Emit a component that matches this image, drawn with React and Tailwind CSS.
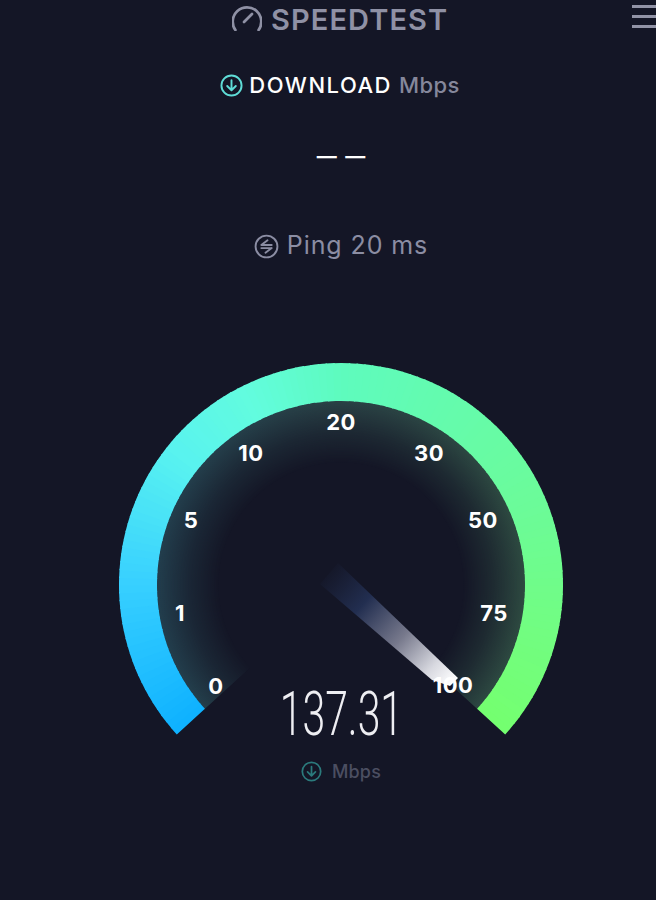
import React from "react";

const CX = 341;
const CY = 585;
const OUTER = 222;
const INNER = 184;
const START = 137.7; // degrees, svg clockwise from +x
const SWEEP = 264.6;

const stops = [
  [0, [15, 178, 255]],
  [0.16, [56, 208, 255]],
  [0.3, [88, 242, 240]],
  [0.4, [98, 252, 222]],
  [0.5, [94, 251, 190]],
  [0.75, [107, 251, 154]],
  [0.9, [114, 253, 128]],
  [1, [116, 255, 112]],
];

const colorAt = (t) => {
  for (let i = 1; i < stops.length; i++) {
    if (t <= stops[i][0]) {
      const [t0, c0] = stops[i - 1];
      const [t1, c1] = stops[i];
      const k = (t - t0) / (t1 - t0);
      return `rgb(${c0.map((c, j) => Math.round(c + (c1[j] - c) * k)).join(",")})`;
    }
  }
  return "rgb(116,255,112)";
};

const pt = (r, deg) => {
  const a = (deg * Math.PI) / 180;
  return `${(CX + r * Math.cos(a)).toFixed(2)} ${(CY + r * Math.sin(a)).toFixed(2)}`;
};

const segment = (a0, a1) =>
  `M${pt(OUTER, a0)} A${OUTER} ${OUTER} 0 0 1 ${pt(OUTER, a1)} L${pt(INNER, a1)} A${INNER} ${INNER} 0 0 0 ${pt(INNER, a0)} Z`;

const sector = `M${CX} ${CY} L${pt(INNER + 1, START)} A${INNER + 1} ${INNER + 1} 0 1 1 ${pt(INNER + 1, START + SWEEP)} Z`;

const SEGMENTS = 132;
const ticks = [
  ["0", 216, 686],
  ["1", 180, 613],
  ["5", 191, 520],
  ["10", 251, 453],
  ["20", 341, 422],
  ["30", 429, 453],
  ["50", 483, 520],
  ["75", 494, 613],
  ["100", 453, 685],
];

const Gauge = () => (
  <svg viewBox="0 340 656 460" className="block w-[656px] h-[460px]">
    <defs>
      <linearGradient id="glowColor" x1="119" x2="563" y1="0" y2="0" gradientUnits="userSpaceOnUse">
        <stop offset="0" stopColor="#213e50" />
        <stop offset="0.5" stopColor="#2a4246" />
        <stop offset="1" stopColor="#2f4d40" />
      </linearGradient>
      <radialGradient id="glowFade" cx={CX} cy={CY} r={INNER + 1} gradientUnits="userSpaceOnUse">
        <stop offset="0.66" stopColor="#000" />
        <stop offset="0.82" stopColor="#666" />
        <stop offset="1" stopColor="#fff" />
      </radialGradient>
      <mask id="glowMask" maskUnits="userSpaceOnUse" x="0" y="340" width="656" height="460">
        <rect x="0" y="340" width="656" height="460" fill="url(#glowFade)" />
      </mask>
      <linearGradient id="needle" x1="325" y1="570" x2="452" y2="684" gradientUnits="userSpaceOnUse">
        <stop offset="0" stopColor="#1f2a4a" stopOpacity="0" />
        <stop offset="0.3" stopColor="#222e50" />
        <stop offset="0.6" stopColor="#77798c" />
        <stop offset="0.85" stopColor="#d8d9e0" />
        <stop offset="1" stopColor="#ffffff" />
      </linearGradient>
    </defs>

    <path d={sector} fill="url(#glowColor)" mask="url(#glowMask)" />

    {Array.from({ length: SEGMENTS }, (_, i) => {
      const a0 = START + (SWEEP * i) / SEGMENTS;
      const a1 = START + (SWEEP * (i + 1)) / SEGMENTS + (i === SEGMENTS - 1 ? 0 : 0.4);
      return <path key={i} d={segment(a0, a1)} fill={colorAt(i / (SEGMENTS - 1))} />;
    })}

    <polygon points="320,584 338,563 458,678 450,686 432,680" fill="url(#needle)" />

    {ticks.map(([label, x, y]) => (
      <text
        key={label}
        x={x}
        y={y}
        dy="8"
        textAnchor="middle"
        fill="#fff"
        className="font-['Inter',sans-serif] font-bold text-[22px] tracking-[0.5px]"
      >
        {label}
      </text>
    ))}
  </svg>
);

const DownloadIcon = ({ className }) => (
  <svg viewBox="0 0 24 24" fill="none" stroke="currentColor" strokeWidth="2" strokeLinecap="round" strokeLinejoin="round" className={className}>
    <circle cx="12" cy="12" r="10.5" />
    <path d="M12 6.5v10M7.5 12.500l4.500 4.500 4.500-4.500" />
  </svg>
);

const App = () => {
  return (
    <div className="w-[656px] h-[900px] overflow-hidden bg-[#141626] font-['Inter',sans-serif]">
      <div className="flex justify-between items-start h-[33px] pl-[232px]">
        <div className="flex items-start text-[#8f91a5]">
          <svg viewBox="0 0 30 26" fill="none" stroke="currentColor" strokeLinecap="round" className="w-[30px] h-[26px] mt-[5px]">
            <path d="M3.400 25A14.300 14.300 0 1 1 26.600 25" strokeWidth="2.800" />
            <path d="M12 17L20 9" strokeWidth="2.800" />
          </svg>
          <span className="ml-[9px] mt-[3px] text-[29px] leading-[34px] font-semibold tracking-[1.1px]">SPEEDTEST</span>
        </div>
        <div className="flex flex-col gap-[7px] w-[24px] mt-[5px]">
          <div className="h-[3px] bg-[#9193a6]" />
          <div className="h-[3px] bg-[#9193a6]" />
          <div className="h-[3px] bg-[#9193a6]" />
        </div>
      </div>

      <div className="mt-[36px] h-[32px] flex items-center justify-center pl-[24px]">
        <DownloadIcon className="w-[23px] h-[23px] text-[#5fdcd6]" />
        <span className="ml-[6px] text-[22px] font-medium tracking-[1.5px] text-white">DOWNLOAD</span>
        <span className="ml-[7px] text-[22px] font-medium tracking-[0.4px] text-[#85879b]">Mbps</span>
      </div>

      <div className="mt-[37px] h-[36px] flex items-center justify-center pl-[26px] text-white text-[20px] font-bold [word-spacing:4px]">— —</div>

      <div className="mt-[54px] h-[36px] flex items-center justify-center pl-[26px] text-[#8b8da3]">
        <svg viewBox="0 0 24 24" fill="none" stroke="currentColor" strokeWidth="1.800" strokeLinecap="round" strokeLinejoin="round" className="w-[25px] h-[25px]">
          <circle cx="12" cy="12" r="10.500" />
          <path d="M13 6L7 10.500H17M17 13.500H7M17 13.500L11 18" />
        </svg>
        <span className="ml-[8px] text-[25px] tracking-[0.9px]">Ping 20 ms</span>
      </div>

      <div className="relative mt-[76px]">
        <Gauge />
        <div className="absolute left-0 right-0 top-[336px] flex justify-center pl-[26px] text-[#eeeef2]">
          <span className="text-[62px] leading-[76px] font-['Roboto',sans-serif] font-light scale-x-[0.66]">137.31</span>
        </div>
        <div className="absolute left-0 right-0 top-[418px] flex items-center justify-center pl-[26px]">
          <DownloadIcon className="w-[21px] h-[21px] text-[#2b7a7c]" />
          <span className="ml-[10px] text-[18px] font-medium tracking-[0.2px] text-[#4b4e61]">Mbps</span>
        </div>
      </div>
    </div>
  );
};

export default App;
